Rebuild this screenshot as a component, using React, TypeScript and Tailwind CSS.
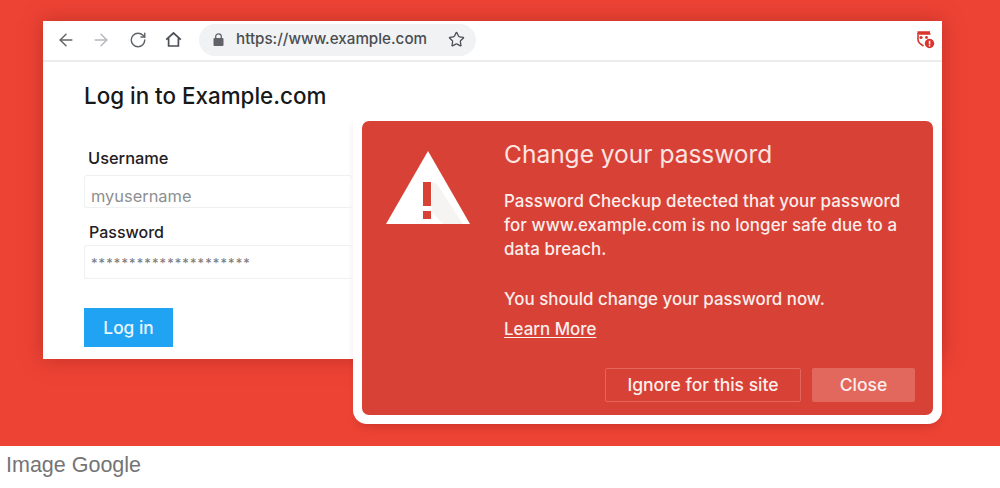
import { ArrowLeft, ArrowRight, RotateCw, Star } from "lucide-react";

function LockIcon() {
  return (
    <svg width="11" height="13" viewBox="0 0 11 13" fill="#5f6368">
      <rect x="0.5" y="5" width="10" height="8" rx="1" />
      <path d="M2.7 5V3.6a2.8 2.8 0 0 1 5.6 0V5" fill="none" stroke="#5f6368" strokeWidth="1.3" />
    </svg>
  );
}

function HomeIcon() {
  return (
    <svg width="17" height="17" viewBox="0 0 17 17" fill="none" stroke="#4c5054" strokeWidth="1.7" strokeLinejoin="miter">
      <path d="M1.2 8.6 L8.5 2 L15.8 8.6 M3.6 7.2 V15 H13.4 V7.2" />
    </svg>
  );
}

function Extension() {
  return (
    <svg width="19" height="19" viewBox="0 0 19 19">
      <path d="M1 3.2h13.5v1.6H1z M1.5 1.2h12.5v2H1.5z" fill="#d8352c" />
      <path d="M2 5v4.5c0 2.5 2 4.5 5.5 6.5" fill="none" stroke="#d8352c" strokeWidth="1.6" />
      <circle cx="5" cy="7.5" r="1.6" fill="#c9352c" />
      <circle cx="10.5" cy="7.5" r="1.4" fill="#c9352c" />
      <circle cx="13.5" cy="13.5" r="4.7" fill="#d8352c" />
      <rect x="12.8" y="10.8" width="1.5" height="3.6" fill="#fff" />
      <rect x="12.8" y="15" width="1.5" height="1.4" fill="#fff" />
    </svg>
  );
}

function Warning() {
  return (
    <svg width="86" height="76" viewBox="0 0 86 76">
      <path d="M43 1 L85 74 H1 Z" fill="#ffffff" />
      <path d="M47 32 L52 34 L78 74 H58 L47 62 Z" fill="#e8e4e2" opacity="0.4" />
      <rect x="38" y="32" width="8" height="24" fill="#d84135" />
      <rect x="38" y="61" width="8" height="8" fill="#d84135" />
    </svg>
  );
}

export default function App() {
  const sans = "font-['Inter','Liberation_Sans',sans-serif]";
  return (
    <div className="w-[1000px] h-[488px] bg-white overflow-hidden">
      <div className={`relative h-[446px] bg-[#ec4335] pt-[21px] pl-[43px] ${sans}`}>
        <div className="w-[899px] h-[338px] bg-white shadow-[0_0_18px_rgba(160,35,25,0.55)]">
          <div className="h-[41px] border-b-2 border-[#eceded] flex items-center pl-[13px] pr-[7px] pb-[2px]">
            <ArrowLeft size={20} strokeWidth={1.7} className="text-[#5f6368]" />
            <ArrowRight size={20} strokeWidth={1.7} className="text-[#b4b7bb] ml-[15px]" />
            <RotateCw size={18} strokeWidth={1.9} className="text-[#5f6368] ml-[18px]" />
            <div className="ml-[18px]">
              <HomeIcon />
            </div>
            <div className="ml-[17px] w-[277px] h-[32px] rounded-full bg-[#f0f2f4] flex items-center pl-[14px]">
              <LockIcon />
              <span className="ml-[12px] text-[15.2px] font-medium text-[#4a4d50] whitespace-nowrap">
                https://www.example.com
              </span>
              <div className="ml-auto mr-[11px]">
                <Star size={17} strokeWidth={1.8} className="text-[#4c5054]" />
              </div>
            </div>
            <div className="ml-auto mt-[-1px]">
              <Extension />
            </div>
          </div>
          <div className="pl-[41px] pt-[19px]">
            <h1 className="text-[22.4px] leading-[30px] font-medium text-[#17181a] whitespace-nowrap">Log in to Example.com</h1>
            <div className="w-[268px] mt-[37px]">
              <div className="pl-[4px] text-[16.4px] leading-[20px] font-medium text-[#1f2022]">Username</div>
              <div className="mt-[7px] h-[33px] rounded-[3px] border border-[#eff0f0] border-r-0 flex items-center pl-[6px] pt-[10px] text-[16.4px] text-[#8d8f91]">
                myusername
              </div>
              <div className="pl-[5px] mt-[14px] text-[16px] leading-[20px] font-medium text-[#1f2022]">Password</div>
              <div className="mt-[3px] h-[34px] rounded-[3px] border border-[#eff0f0] border-r-0 flex items-center pl-[6px] pt-[3px] text-[13px] tracking-[1.1px] text-[#77797b]">
                *********************
              </div>
              <button className="mt-[29px] block w-[89px] h-[39px] pt-[1px] bg-[#20a3f3] text-[#eaf6fe] text-[17.3px] font-medium">
                Log in
              </button>
            </div>
          </div>
        </div>

        <div className="absolute left-[353px] top-[111px] w-[589px] h-[313px] bg-white rounded-b-[14px] pt-[10px] px-[9px] pb-[9px] shadow-[0_7px_10px_-5px_rgba(150,30,20,0.4)]">
          <div className="h-full rounded-[7px] bg-[#d84135] flex text-white">
            <div className="w-[142px] shrink-0 pl-[23px] pt-[29px]">
              <Warning />
            </div>
            <div className="flex-1 pr-[18px] text-[#fbeeec]">
              <h2 className="mt-[17px] text-[24.5px] leading-[32px] font-normal text-[#fbe4e1] whitespace-nowrap">Change your password</h2>
              <p className="mt-[19px] text-[16.9px] leading-[24px] font-medium tracking-[0.1px] whitespace-nowrap">
                Password Checkup detected that your password
                <br />
                for www.example.com is no longer safe due to a
                <br />
                data breach.
              </p>
              <p className="mt-[26px] text-[16.9px] leading-[24px] font-medium whitespace-nowrap">You should change your password now.</p>
              <a className="block mt-[6px] text-[16.9px] leading-[24px] font-medium underline underline-offset-2">Learn More</a>
              <div className="mt-[27px] flex justify-end gap-[11px]">
                <button className="w-[196px] h-[34px] border border-[#e4665b] rounded-[2px] text-[17.5px] font-medium text-[#fbeeec]">
                  Ignore for this site
                </button>
                <button className="w-[103px] h-[34px] bg-[#e2675d] rounded-[2px] text-[17.5px] font-medium text-[#fbeeec]">
                  Close
                </button>
              </div>
            </div>
          </div>
        </div>
      </div>
      <div className="pl-[6px] pt-[7px] text-[21.5px] leading-[24px] text-[#757575] font-['Liberation_Sans',Arial,sans-serif]">
        Image Google
      </div>
    </div>
  );
}
